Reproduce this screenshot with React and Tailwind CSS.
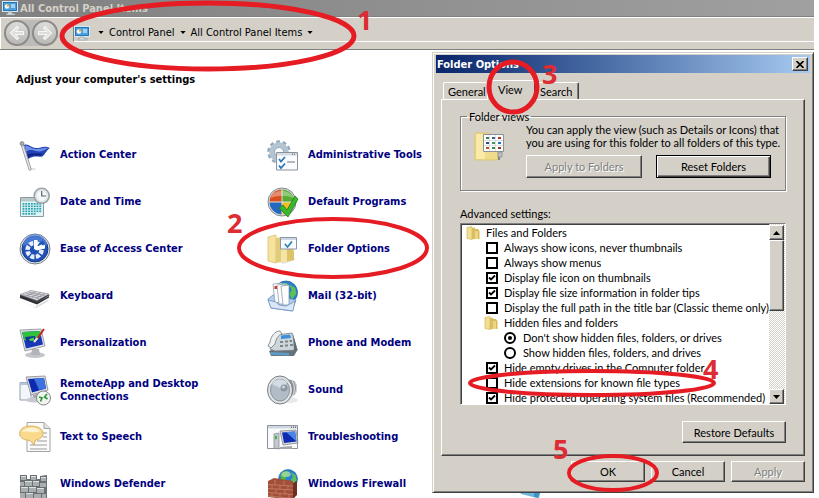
import React from "react";

const tahoma = "font-['DejaVu_Sans_Condensed','DejaVu_Sans',sans-serif]";

function Icon({ children }) {
  return (
    <svg viewBox="0 0 32 32" className="size-8 shrink-0" aria-hidden="true">
      {children}
    </svg>
  );
}

function FlagIcon() {
  return (
    <Icon>
      <ellipse cx="13" cy="30" rx="4" ry="1" fill="#e4e4e8" />
      <path d="M5 6C9 4 12 9 17 9C22 9 25 6 31 9C28 11 27 13 25 16C22 20 17 15 9 20Z" fill="#2443b4" />
      <path d="M6 7C10 6 12 10 17 10C22 10 25 8 29 9C25 12 21 13 17 12C13 11 10 10 7 13Z" fill="#6f8fe8" />
      <path d="M9 19C15 14 20 19 24 15C21 15 14 13 8 16Z" fill="#13258a" />
      <path d="M3 5L11 30" stroke="#8b8b93" strokeWidth="3" strokeLinecap="round" />
      <path d="M3 5L11 30" stroke="#e3e4e8" strokeWidth="1.6" strokeLinecap="round" />
      <circle cx="3" cy="4.500" r="2" fill="#a9abb2" stroke="#707078" strokeWidth=".6" />
    </Icon>
  );
}

function CalendarIcon() {
  const cells = [];
  for (let r = 0; r < 5; r++)
    for (let c = 0; c < 7; c++)
      if (!(r === 4 && c > 4)) cells.push(<rect key={r + "-" + c} x={3.5 + c * 2.8} y={17 + r * 2.5} width="1.9" height="1.7" fill="#2fa3b0" />);
  return (
    <Icon>
      <path d="M1.500 11.500H24.500V30.500H1.500Z" fill="#dff6f7" stroke="#8a9a9e" />
      <path d="M2 12H24V15.500H2Z" fill="#b9c8cc" />
      {cells}
      <circle cx="22.700" cy="9.800" r="7.500" fill="#e9eef1" stroke="#9aa2a6" strokeWidth="1.600" />
      <circle cx="22.700" cy="9.800" r="5.500" fill="#f6f9fa" stroke="#c7d0d4" strokeWidth=".6" />
      <path d="M22.700 5V10H27" fill="none" stroke="#59636b" strokeWidth="1.200" />
    </Icon>
  );
}

function AccessIcon() {
  return (
    <Icon>
      <circle cx="16" cy="16" r="15" fill="#e6e9ee" stroke="#777d88" />
      <circle cx="16" cy="16" r="13" fill="#2151b4" stroke="#173a86" />
      <path d="M4 13A12 12 0 0 1 28 13C22 9 10 10 4 13Z" fill="#5b8ae0" opacity=".7" />
      <circle cx="15.500" cy="17" r="7" fill="none" stroke="#e8eefb" strokeWidth="4.500" strokeDasharray="4 1.500" />
      <path d="M15 16V7H18.500V13L26 12V15.500L18 17.500Z" fill="#fff" />
      <path d="M18.500 13L23 7.500L26 10Z" fill="#2151b4" />
    </Icon>
  );
}

function KeyboardIcon() {
  return (
    <Icon>
      <path d="M1 20L16 27L30 19L28 22L17 28Z" fill="#d8d8da" />
      <path d="M1 15L12 11L31 15L18 23L1 17Z" fill="#3b3d42" />
      <path d="M1 14.500L12 10.500L30 14L18 20.500Z" fill="#dcdde1" stroke="#85878d" strokeWidth=".6" />
      <path d="M4 14.600L20 18.500M7 13.400L23 17M10 12.300L26 15.400M8 15.600L17 11.500M13 17L22 12.500M17 18.500L26 13.500" stroke="#85878d" strokeWidth=".7" />
      <path d="M1 16L18 22.500L30 16V17.500L18 24.500L1 18Z" fill="#2c2d32" />
    </Icon>
  );
}

function PersonalizationIcon() {
  return (
    <Icon>
      <ellipse cx="16" cy="28" rx="10" ry="3" fill="#c3c5c9" />
      <path d="M13 22H20L21 28H12Z" fill="#b1b4b9" />
      <path d="M1 3L22 2L26 19L6 24Z" fill="#e2e3e6" stroke="#8b8d93" strokeWidth=".8" />
      <path d="M3 5L21 4L24 17.500L7 21.500Z" fill="#1838b8" />
      <path d="M3 5L21 4L22 9C18 9 17 13 13 12C10 11 10 15 5 13Z" fill="#2fc23c" />
      <path d="M6 10L16 9L17 14L8 16Z" fill="#1431a0" />
      <path d="M10 12L15 10.500L15 13.500L11 14Z" fill="#42d64d" />
      <path d="M25 2L18 12" stroke="#c32220" strokeWidth="2" />
      <path d="M18.500 11L15 15" stroke="#f0e7d2" strokeWidth="2" />
    </Icon>
  );
}

function RemoteIcon() {
  return (
    <Icon>
      <path d="M1 8.500H12V26H1Z" fill="#f2f5fa" stroke="#8695ad" strokeWidth=".9" />
      <path d="M1 8.500H12V11H1Z" fill="#b5c4dc" />
      <path d="M7 3L26 2L29 16L12 21Z" fill="#dedfe3" stroke="#84868c" strokeWidth=".8" />
      <path d="M9 5L25 4L27 14.500L13 18.500Z" fill="#0b2aad" />
      <path d="M15 4.600L25 4L27 14.500L20 16Z" fill="#3d72e0" />
      <path d="M14 21L21 19L23 25H13Z" fill="#a4a7ad" />
      <ellipse cx="15" cy="26" rx="8" ry="2.500" fill="#c7c9ce" />
      <circle cx="24.500" cy="24" r="7" fill="#f1f3f0" stroke="#85878a" />
      <path d="M20 23L23 24L21.500 27.500M28 20L25.500 23L28.500 25" fill="none" stroke="#2d9a38" strokeWidth="1.700" />
    </Icon>
  );
}

function SpeechIcon() {
  return (
    <Icon>
      <path d="M8 1.500H25L31 7.500V30.500H8Z" fill="#fbfbfb" stroke="#a3a3a3" />
      <path d="M25 1.500V7.500H31" fill="#e2e2e2" stroke="#a3a3a3" />
      <path d="M24 12H28M24 16H28M18 20H28M11 24H28M11 28H28" stroke="#9b9b9b" />
      <path d="M12 5C19 5 24 8 24 12.500C24 17 19 19 16.500 19L15 24L11 19.500C4 19 .6 16.500 .6 12.500C.6 8 5 5 12 5Z" fill="#f9d98c" stroke="#cfa452" strokeWidth=".8" />
      <path d="M3 11C5 6 18 5 21 10C16 13 8 9 3 11Z" fill="#fef3d2" />
    </Icon>
  );
}

function DefenderIcon() {
  return (
    <Icon>
      <path d="M1 7H8V11H11V7H18V11H21V8L28 7V32H1Z" fill="#6b6f72" />
      <path d="M2 8H7V12H2ZM12 8H17V12H12ZM22 9H27V13H22ZM1 14H5V18H1ZM6 13H13V18H6ZM14 13H20V18H14ZM21 15H27V19H21ZM2 19H9V24H2ZM10 19H17V24H10ZM18 20H25V25H18ZM1 25H6V30H1ZM7 25H14V30H7ZM15 26H22V31H15ZM23 26H27V31H23Z" fill="#a9aeb0" />
      <path d="M2 8H7V9H2ZM12 8H17V9H12ZM22 9H27V10H22ZM6 13H13V14H6ZM14 13H20V14H14ZM2 19H9V20H2ZM10 19H17V20H10ZM18 20H25V21H18ZM7 25H14V26H7Z" fill="#dde1e2" />
    </Icon>
  );
}

function AdminIcon() {
  return (
    <Icon>
      <circle cx="12" cy="13" r="10" fill="none" stroke="#93a8ba" strokeWidth="3.500" strokeDasharray="3.600 2.700" />
      <circle cx="12" cy="13" r="7" fill="none" stroke="#b3c5d3" strokeWidth="5.500" />
      <circle cx="12" cy="13" r="4.500" fill="#fff" stroke="#8398aa" strokeWidth=".8" />
      <path d="M9.500 13.500H30.500V31H9.500Z" fill="#fafcff" stroke="#8b929b" />
      <path d="M10 14H30V16.500H10Z" fill="#d5dbe3" />
      <path d="M25 15.200H26M27 15.200H28" stroke="#555" />
      <path d="M12 20L14 22.500L18 18M12 26.500L14 29L18 24.500" fill="none" stroke="#2b78b8" strokeWidth="1.800" />
      <path d="M20 23H28" stroke="#6e757c" />
    </Icon>
  );
}

function DefaultsIcon() {
  return (
    <Icon>
      <circle cx="15" cy="16" r="14" fill="#dbdfe1" stroke="#81888c" />
      <path d="M14.500 15.500V3.500A12.500 12.500 0 0 0 2.500 15.500Z" fill="#d9501f" />
      <path d="M15.500 15.500V3.500A12.500 12.500 0 0 1 27.500 15.500Z" fill="#55ad32" />
      <path d="M14.500 16.500V28.500A12.500 12.500 0 0 1 2.500 16.500Z" fill="#2668bd" />
      <path d="M15.500 16.500V28.500A12.500 12.500 0 0 0 27.500 16.500Z" fill="#f3bb21" />
      <path d="M4 12C6 3 23 2 26 12C20 9 10 9 4 12Z" fill="#fff" opacity=".35" />
      <path d="M12 22L16 19L20 24L28 10L31 13L21 31Z" fill="#38b82c" stroke="#207c18" strokeWidth=".8" />
    </Icon>
  );
}

function FolderOptionsIcon() {
  return (
    <Icon>
      <path d="M10 27L26 21L28 27L16 31Z" fill="#e2e2e2" />
      <path d="M8 8H20L27 18V27L18 29H8Z" fill="#dcc367" />
      <path d="M1 4L9 2V30L1 28Z" fill="#f5e39f" stroke="#d3ba66" strokeWidth=".7" />
      <path d="M9 5L14 4V29L9 30Z" fill="#e3cb7c" />
      <path d="M14 16H20V29L14 29.500Z" fill="#f4e4a6" />
      <path d="M13.500 4.500H29.500V16H13.500Z" fill="#f9fcff" stroke="#8a96a5" />
      <path d="M14 5H29V7H14Z" fill="#ccd8e6" />
      <path d="M18 11L20.500 14L25 8.500" fill="none" stroke="#277db8" strokeWidth="1.700" />
    </Icon>
  );
}

function Globe({ cx, cy, r }) {
  return (
    <g transform={`translate(${cx} ${cy}) scale(${r / 10})`}>
      <circle r="10" fill="#2a7fd0" stroke="#185a9c" strokeWidth=".6" />
      <path d="M-8 -4C-6 -8 -2 -9 1 -8L2 -4L-2 -2L-3 3L-7 2Z" fill="#4fb648" />
      <path d="M3 -7L8 -4L9 1L5 6L3 1L5 -2Z" fill="#5cc153" />
      <ellipse cx="-2" cy="-5" rx="5" ry="3" fill="#fff" opacity=".4" />
    </g>
  );
}

function MailIcon() {
  return (
    <Icon>
      <Globe cx={19} cy={12.5} r={11.5} />
      <path d="M1 19L6 15L29 20L25 31L4 28Z" fill="#b3cdec" stroke="#6a8cb6" strokeWidth=".8" />
      <path d="M6 4L15 3V22L8 23Z" fill="#fdfdfd" stroke="#8392a8" strokeWidth=".7" />
      <path d="M10 5L18 4V24L12 24Z" fill="#fdfdfd" stroke="#8392a8" strokeWidth=".7" />
      <path d="M14 6L22 5V25L16 25Z" fill="#fdfdfd" stroke="#8392a8" strokeWidth=".7" />
      <path d="M7.500 6H10V9H7.500Z" fill="#d23420" />
      <path d="M1 20L9 22L12 25L19 26L25 23L28 21L26 31L4 28Z" fill="#dae7f7" stroke="#6f8fba" strokeWidth=".8" />
    </Icon>
  );
}

function PhoneIcon() {
  return (
    <Icon>
      <path d="M2 24L10 21L31 22L27 29L4 29Z" fill="#65727b" />
      <path d="M3 25L22 26V28.500L4 28Z" fill="#5f9cc4" />
      <path d="M9 8L25 6L30 23L8 24L3 22Z" fill="#cfd6da" stroke="#737d84" strokeWidth=".8" />
      <path d="M14 8.500L23 7.500L24 11L14 12Z" fill="#3c8fd8" />
      <path d="M13 14H16V16H13ZM18 13.500H21V15.500H18ZM22.500 13H25V15H22.500ZM13 18H16V20H13ZM18 17.500H21V19.500H18ZM23 17H26V19H23Z" fill="#7b858c" />
      <path d="M3 15C4 9 8 4 13 4L15 7C11 8 9 12 8 17L4 21L1 19Z" fill="#eef1f2" stroke="#6d777d" strokeWidth=".8" />
      <path d="M26 7L30 21V24L27 24Z" fill="#626c73" />
    </Icon>
  );
}

function SoundIcon() {
  return (
    <Icon>
      <ellipse cx="22" cy="26" rx="9" ry="3" fill="#e8e8ea" />
      <path d="M14 3L27 7C31 10 31 18 27 21L16 28Z" fill="#8b9095" />
      <path d="M25 7C28 10 28 19 25 22M28 8C30 11 30 17 28 20" fill="none" stroke="#d5d9dc" strokeWidth="1.200" />
      <ellipse cx="13" cy="16" rx="12.500" ry="14" fill="#e0e3e6" stroke="#777c80" />
      <ellipse cx="13" cy="16" rx="9.500" ry="11" fill="#b1bcc6" stroke="#8b949c" />
      <path d="M15 15L5 10C8 4 17 4 20 9Z" fill="#d3dce4" />
      <circle cx="17" cy="14" r="3.500" fill="#8b98a4" />
      <circle cx="16.500" cy="13" r="1.500" fill="#cfd8df" />
    </Icon>
  );
}

function TroubleIcon() {
  return (
    <Icon>
      <path d="M.5 4.500H30.500V27.500H.5Z" fill="#fafbfd" stroke="#8b939c" />
      <path d="M1 5H30V7.500H1Z" fill="#cfd6df" />
      <path d="M24 6.200H25M26 6.200H27M28 6.200H29" stroke="#444" />
      <path d="M7 13L12 12V28L7 27Z" fill="#c5c9cd" stroke="#7c8287" strokeWidth=".7" />
      <path d="M8 15L10 14.700V18L8 18.300Z" fill="#43b53a" />
      <path d="M13 10L29 9L31 22L16 24Z" fill="#d5d8dc" stroke="#74787d" strokeWidth=".7" />
      <path d="M15 11.500L28 10.500L29.500 20.500L17 22Z" fill="#0d2cb0" />
      <path d="M19 11L28 10.500L29.500 20.500Z" fill="#4a85e6" />
      <path d="M13 26L25 25V28H13Z" fill="#a3a7ab" />
    </Icon>
  );
}

function FirewallIcon() {
  return (
    <Icon>
      <Globe cx={21} cy={11} r={9.5} />
      <path d="M26 15L30 13V27L26 31Z" fill="#6f2f20" />
      <path d="M1 13L7 10L26 13V32L1 29Z" fill="#a34f38" />
      <path d="M1 16.500L26 18M1 20.500L26 22M1 24.500L26 26.500M1 28L26 30.500M8 12V16.800M17 13V17.300M5 17V20.600M13 17.500V21M21 18V21.500M9 21V25M18 21.500V26M5 25V28.300M13 25.500V29.500M22 26V30" stroke="#c98a73" strokeWidth=".7" />
    </Icon>
  );
}

function UpdateIcon() {
  return (
    <Icon>
      <path d="M5 24L25 26L24 31L18 30L6 27Z" fill="#6fb5dc" />
      <path d="M19 26L25 26L23 31L19 30Z" fill="#3f94c6" />
    </Icon>
  );
}

function PanelIcon() {
  return (
    <svg viewBox="0 0 16 16" className="size-4 shrink-0" aria-hidden="true">
      <rect x=".5" y="1.500" width="15" height="10" fill="#3a8fd0" stroke="#d6e8f5" />
      <rect x="1.500" y="2.500" width="13" height="8" fill="#4aa0dd" stroke="#1c5f9c" strokeWidth=".6" />
      <circle cx="5" cy="6.500" r="2.300" fill="#f4f8fb" />
      <path d="M5 6.500V4.200A2.300 2.300 0 0 1 7.300 6.500Z" fill="#f0a126" />
      <path d="M9 5H13M9 7H13" stroke="#fff" />
      <path d="M6 12H10V13.500H13V15H4V13.500H6Z" fill="#d9dde0" stroke="#80888f" strokeWidth=".5" />
    </svg>
  );
}

function FolderIcon() {
  return (
    <svg viewBox="0 0 14 14" className="size-[14px] shrink-0" aria-hidden="true">
      <path d="M8 3H12L13.500 5V13H8Z" fill="#d9bb54" />
      <path d="M1 1.500L6 .5V13.500L1 12.500Z" fill="#f3df92" stroke="#cdb04f" strokeWidth=".6" />
      <path d="M6 2L9 1.500V13L6 13.500Z" fill="#d8bd62" />
      <path d="M9 5H12V13H9Z" fill="#ecd684" />
    </svg>
  );
}

function FolderViewIcon() {
  const dots = [];
  const colors = ["#3c7d56", "#3b5f9a", "#b03426", "#324b7d", "#44945b", "#2d6eb0", "#b1562a", "#3c8a4f", "#a73022"];
  for (let i = 0; i < 9; i++)
    dots.push(<rect key={i} x={12 + (i % 3) * 6} y={6 + Math.floor(i / 3) * 5} width="3" height="2" fill={colors[i]} />);
  return (
    <svg viewBox="0 0 32 32" className="size-8 shrink-0" aria-hidden="true">
      <path d="M1 2H12L24 5V29H1Z" fill="#f0db8a" stroke="#dcc570" />
      <path d="M2 3H11V28H2Z" fill="#f9eaa8" />
      <path d="M9.500 3.500H29.500V20.500H9.500Z" fill="#fdfdfd" stroke="#8c9299" />
      {dots}
      <path d="M15.500 4V20M21.500 4V20M10 9.500H29M10 14.500H29" stroke="#cfd3d7" strokeWidth=".7" />
      <path d="M24 21H28V26H24Z" fill="#b9bec3" stroke="#7f858a" strokeWidth=".6" />
      <path d="M25 26V29" stroke="#7f858a" strokeWidth="2" />
    </svg>
  );
}

const items = [
  ["Action Center", FlagIcon],
  ["Administrative Tools", AdminIcon],
  ["Date and Time", CalendarIcon],
  ["Default Programs", DefaultsIcon],
  ["Ease of Access Center", AccessIcon],
  ["Folder Options", FolderOptionsIcon],
  ["Keyboard", KeyboardIcon],
  ["Mail (32-bit)", MailIcon],
  ["Personalization", PersonalizationIcon],
  ["Phone and Modem", PhoneIcon],
  ["RemoteApp and Desktop Connections", RemoteIcon],
  ["Sound", SoundIcon],
  ["Text to Speech", SpeechIcon],
  ["Troubleshooting", TroubleIcon],
  ["Windows Defender", DefenderIcon],
  ["Windows Firewall", FirewallIcon],
];

function Triangle({ up, className = "h-1 w-[7px]" }) {
  return (
    <svg viewBox="0 0 7 4" className={"shrink-0 " + className} aria-hidden="true">
      <path d={up ? "M0 4L3.500 0L7 4Z" : "M0 0H7L3.500 4Z"} fill="#000" />
    </svg>
  );
}

function NavArrow({ label, flip }) {
  return (
    <button type="button" aria-label={label} className="grid size-[26px] place-items-center rounded-full border-2 border-[#8b8b8b] bg-linear-to-b from-[#dcdcda] to-[#b9b8b4]">
      <svg viewBox="0 0 16 16" className={"size-4 " + (flip ? "rotate-180" : "")} aria-hidden="true">
        <path d="M1.500 8L8 1.500L9.500 3L6.500 6.500H14.500V9.500H6.500L9.500 13L8 14.500Z" fill="#dedddb" stroke="#f6f6f4" strokeWidth="1.100" />
      </svg>
    </button>
  );
}

const raised = "border border-t-white border-l-white border-r-[#404040] border-b-[#404040] shadow-[inset_-1px_-1px_0_#808080]";

function DialogButton({ children, className = "", disabled, focus }) {
  return (
    <button
      type="button"
      disabled={disabled}
      className={
        "flex items-center justify-center bg-[#d4d0c8] " +
        (focus ? "border border-black shadow-[inset_1px_1px_0_#fff,inset_-1px_-1px_0_#404040,inset_-2px_-2px_0_#808080] " : raised + " ") +
        (disabled ? "text-[#808080] [text-shadow:1px_1px_0_#fff] " : "") +
        className
      }
    >
      {children}
    </button>
  );
}

function CheckRow({ label, checked }) {
  return (
    <label className="flex h-[15px] items-center gap-[6px] pl-6">
      <span className="grid size-3">
        <input type="checkbox" defaultChecked={checked} className="peer size-3 appearance-none border-2 border-black bg-white [grid-area:1/1]" />
        <svg viewBox="0 0 12 12" className="pointer-events-none hidden size-3 [grid-area:1/1] peer-checked:block" aria-hidden="true">
          <path d="M3 5.500L5 7.500L9 3.500" fill="none" stroke="#000" strokeWidth="1.800" />
        </svg>
      </span>
      {label}
    </label>
  );
}

function RadioRow({ label, checked }) {
  return (
    <label className="flex h-[15px] items-center gap-[7px] pl-[42px]">
      <span className="grid size-3">
        <input type="radio" name="hidden-files" defaultChecked={checked} className="peer size-3 appearance-none rounded-full border-2 border-black bg-white [grid-area:1/1]" />
        <span className="pointer-events-none hidden size-1 place-self-center rounded-full bg-black [grid-area:1/1] peer-checked:block" />
      </span>
      {label}
    </label>
  );
}

function FolderOptionsDialog() {
  return (
    <section
      role="dialog"
      aria-label="Folder Options"
      className="absolute top-[52px] left-[432px] w-[382px] border border-t-[#d4d0c8] border-l-[#d4d0c8] border-r-[#404040] border-b-[#404040] bg-[#d4d0c8] font-[Lato,'Liberation_Sans',sans-serif] text-[11px] leading-[13px] text-black shadow-[inset_1px_1px_0_#fff,inset_-1px_-1px_0_#808080]"
    >
      <div className="p-[3px] pt-[2px]">
        <header className={"flex h-[18px] items-center justify-between bg-linear-to-r from-[#0a246a] to-[#a6caf0] pr-[2px] pl-px font-bold text-white " + tahoma}>
          <h2>Folder Options</h2>
          <button type="button" aria-label="Close" className={"grid h-[14px] w-4 place-items-center bg-[#d4d0c8] " + raised}>
            <svg viewBox="0 0 8 7" className="h-[7px] w-2" aria-hidden="true">
              <path d="M.5 0L7.500 7M7.500 0L.5 7" stroke="#000" strokeWidth="1.600" />
            </svg>
          </button>
        </header>

        <div className="px-[5px] pt-[7px] pb-[7px]">
          <div role="tablist" className="flex items-end pl-[2px]">
            <button type="button" role="tab" aria-selected="false" className="h-[17px] w-11 rounded-t-[2px] border border-b-0 border-t-white border-l-white border-r-transparent pl-1 text-left">
              General
            </button>
            <button type="button" role="tab" aria-selected="true" className="-mb-px h-[20px] w-12 rounded-t-[2px] border border-b-0 border-t-white border-l-white border-r-[#404040] bg-[#d4d0c8] pb-[2px] pl-[10px] text-left">
              View
            </button>
            <button type="button" role="tab" aria-selected="false" className="h-[17px] w-11 rounded-t-[2px] border border-b-0 border-t-white border-l-transparent border-r-[#404040] pl-1 text-left shadow-[inset_-1px_0_0_#808080]">
              Search
            </button>
          </div>

          <div role="tabpanel" className={"px-[18px] pt-[10px] pb-[12px] " + raised}>
            <fieldset className="border border-[#808080] pb-3 shadow-[1px_1px_0_#fff,inset_1px_1px_0_#fff]">
              <legend className="ml-[6px] px-[2px]">Folder views</legend>
              <div className="flex gap-5 pl-[13px]">
                <div className="pt-2">
                  <FolderViewIcon />
                </div>
                <div className="grow">
                  <p className="whitespace-nowrap">
                    You can apply the view (such as Details or Icons) that
                    <br />
                    you are using for this folder to all folders of this type.
                  </p>
                  <div className="flex gap-[14px] pt-[6px]">
                    <DialogButton disabled className="h-[23px] w-[116px]">Apply to Folders</DialogButton>
                    <DialogButton focus className="h-[23px] w-[115px]">Reset Folders</DialogButton>
                  </div>
                </div>
              </div>
            </fieldset>

            <h3 className="pt-4 pb-[3px]">Advanced settings:</h3>
            <div className="flex h-[182px] border border-t-[#808080] border-l-[#808080] border-r-white border-b-white bg-white shadow-[inset_1px_1px_0_#404040]">
              <div className="h-full grow overflow-hidden pt-px pl-px whitespace-nowrap">
                <div className="flex h-[15px] items-center gap-[6px] pl-[4px]">
                  <FolderIcon />
                  Files and Folders
                </div>
                <CheckRow label="Always show icons, never thumbnails" />
                <CheckRow label="Always show menus" />
                <CheckRow label="Display file icon on thumbnails" checked />
                <CheckRow label="Display file size information in folder tips" checked />
                <CheckRow label="Display the full path in the title bar (Classic theme only)" />
                <div className="flex h-[15px] items-center gap-[6px] pl-[22px]">
                  <FolderIcon />
                  Hidden files and folders
                </div>
                <RadioRow label="Don't show hidden files, folders, or drives" checked />
                <RadioRow label="Show hidden files, folders, and drives" />
                <CheckRow label="Hide empty drives in the Computer folder" checked />
                <CheckRow label="Hide extensions for known file types" />
                <CheckRow label="Hide protected operating system files (Recommended)" checked />
              </div>
              <div className="flex w-4 shrink-0 flex-col bg-[repeating-conic-gradient(#fff_0_25%,#d4d0c8_0_50%)] bg-[length:2px_2px] pt-px pr-px">
                <button type="button" aria-label="Scroll up" className={"grid h-[15px] shrink-0 place-items-center bg-[#d4d0c8] " + raised}>
                  <Triangle up />
                </button>
                <div className={"h-[71px] shrink-0 bg-[#d4d0c8] " + raised} />
                <button type="button" aria-label="Scroll down" className={"mt-auto grid h-[15px] shrink-0 place-items-center bg-[#d4d0c8] " + raised}>
                  <Triangle />
                </button>
              </div>
            </div>

            <div className="flex justify-end pt-4">
              <DialogButton className="h-[22px] w-[104px]">Restore Defaults</DialogButton>
            </div>
          </div>

          <footer className="flex justify-end gap-[6px] pt-[5px]">
            <DialogButton className="h-[21px] w-[74px]">OK</DialogButton>
            <DialogButton className="h-[21px] w-[74px]">Cancel</DialogButton>
            <DialogButton disabled className="h-[21px] w-[74px]">Apply</DialogButton>
          </footer>
        </div>
      </div>
    </section>
  );
}

function Annotations() {
  return (
    <svg width="819" height="498" className="pointer-events-none absolute top-0 left-0 font-['Open_Sans',sans-serif] text-[27px] font-bold">
      <g fill="none" stroke="#e51c23" strokeWidth="4">
        <ellipse cx="208" cy="36" rx="146" ry="33" strokeWidth="5" />
        <ellipse cx="333" cy="248" rx="94" ry="29" />
        <ellipse cx="513" cy="87" rx="24" ry="25" strokeWidth="5" />
        <ellipse cx="592" cy="383" rx="122" ry="12" />
        <ellipse cx="613" cy="473" rx="44" ry="17" />
      </g>
      <g fill="#dd2c33">
        <text x="357" y="30">1</text>
        <text x="227" y="233">2</text>
        <text x="542" y="84">3</text>
        <text x="703" y="379">4</text>
        <text x="553" y="459">5</text>
      </g>
    </svg>
  );
}

export default function App() {
  return (
    <div className={"relative h-screen overflow-hidden bg-white text-[11px] leading-[13px] text-black " + tahoma}>
      <div className="pr-[5px]">
        <header className="flex h-4 items-center gap-[2px] bg-linear-to-r from-[#808080] to-[#a0a0a0] pl-[2px] font-bold text-[#d4d0c8]">
          <PanelIcon />
          <h1>All Control Panel Items</h1>
        </header>
        <nav className="flex h-[34px] items-center border-t border-b border-t-[#808080] border-b-[#808080] bg-[#d4d0c8] pl-1 shadow-[inset_0_1px_0_#fff,inset_1px_0_0_#fff]">
          <div className="flex gap-[2px] rounded-full bg-[#bdbbb6]">
            <NavArrow label="Back" />
            <NavArrow label="Forward" flip />
          </div>
          <div className="ml-[15px] flex h-[18px] grow items-center gap-[5px] border-b border-l border-b-white border-l-[#808080]">
            <PanelIcon />
            <Triangle className="ml-[3px] h-[3px] w-[6px]" />
            <a href="#control-panel">Control Panel</a>
            <Triangle className="h-[3px] w-[6px]" />
            <a href="#all-items">All Control Panel Items</a>
            <Triangle className="h-[3px] w-[6px]" />
          </div>
        </nav>
      </div>

      <main className="pt-[23px]">
        <h2 className="pl-4 font-bold">Adjust your computer's settings</h2>
        <div className="mt-[45px] flex pl-[19px]">
          <ul className="grid shrink-0 auto-rows-[47px] grid-cols-[248px_248px] items-center font-bold text-[#000080]">
            {items.map(([label, Glyph]) => (
              <li key={label}>
                <a href="#item" className="flex items-center gap-[9px]">
                  <Glyph />
                  <span className="max-w-[150px]">{label}</span>
                </a>
              </li>
            ))}
          </ul>
          <div className="flex flex-col justify-end pb-2">
            <UpdateIcon />
          </div>
        </div>
      </main>

      <FolderOptionsDialog />
      <Annotations />
    </div>
  );
}
